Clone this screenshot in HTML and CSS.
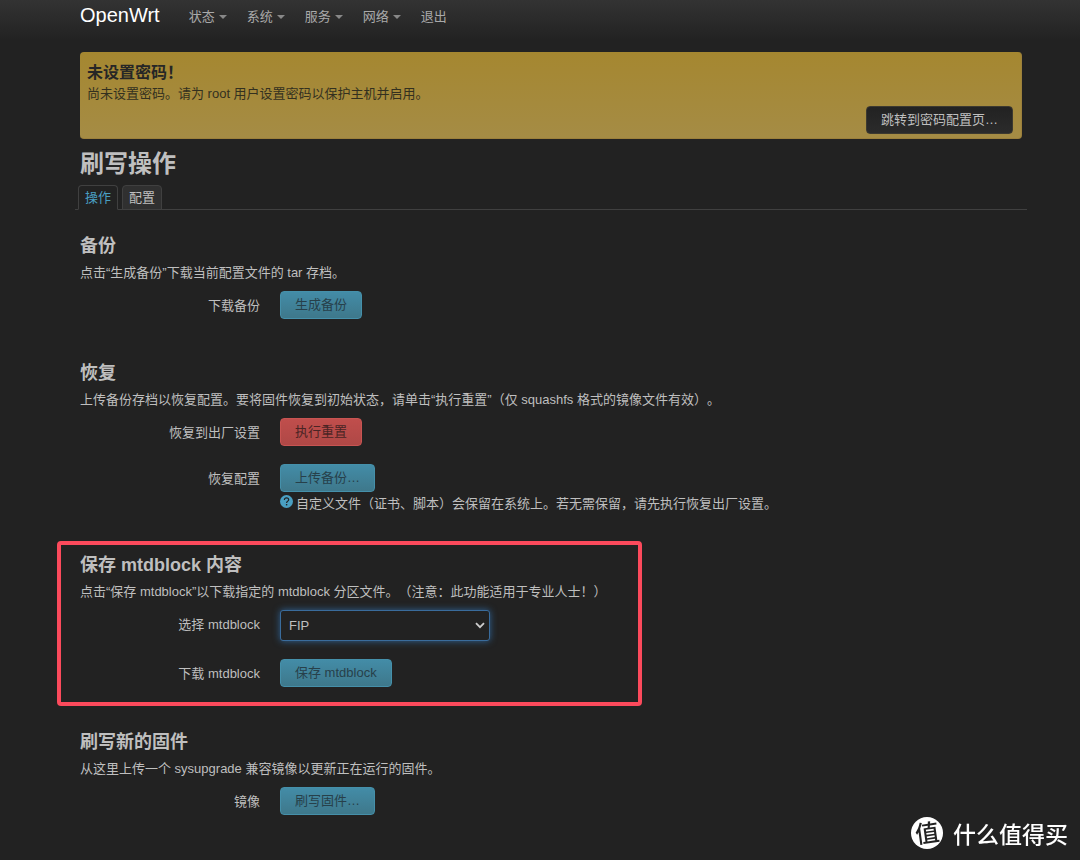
FILE: index.html
```html
<!DOCTYPE html>
<html lang="zh-CN">
<head>
<meta charset="utf-8">
<title>OpenWrt - 刷写操作</title>
<link rel="stylesheet" href="styles.css">
</head>
<body>
<header class="topbar">
  <a class="brand" href="#">OpenWrt</a>
  <nav class="nav">
    <a class="nav-link has-menu" href="#">状态</a>
    <a class="nav-link has-menu" href="#">系统</a>
    <a class="nav-link has-menu" href="#">服务</a>
    <a class="nav-link has-menu" href="#">网络</a>
    <a class="nav-link" href="#">退出</a>
  </nav>
</header>

<main class="content">
  <div class="alert">
    <h4 class="alert-title">未设置密码！</h4>
    <p class="alert-text">尚未设置密码。请为 root 用户设置密码以保护主机并启用。</p>
    <button class="btn btn-dark" type="button">跳转到密码配置页…</button>
  </div>

  <h2 class="page-title">刷写操作</h2>
  <nav class="tabs">
    <a class="tab active" href="#">操作</a>
    <a class="tab" href="#">配置</a>
  </nav>

  <section class="section">
    <h3 class="section-title">备份</h3>
    <p class="desc">点击“生成备份”下载当前配置文件的 tar 存档。</p>
    <div class="row">
      <label class="label" for="backup">下载备份</label>
      <div class="field"><button class="btn btn-blue" id="backup" type="button">生成备份</button></div>
    </div>
  </section>

  <section class="section">
    <h3 class="section-title">恢复</h3>
    <p class="desc">上传备份存档以恢复配置。要将固件恢复到初始状态，请单击“执行重置”（仅 squashfs 格式的镜像文件有效）。</p>
    <div class="row">
      <label class="label" for="reset">恢复到出厂设置</label>
      <div class="field"><button class="btn btn-red" id="reset" type="button">执行重置</button></div>
    </div>
    <div class="row">
      <label class="label" for="restore">恢复配置</label>
      <div class="field">
        <button class="btn btn-blue" id="restore" type="button">上传备份…</button>
        <p class="hint">
          <svg class="help" viewBox="0 0 13 13" aria-hidden="true">
            <circle cx="6.5" cy="6.5" r="6.5" fill="#4a9fc2"/>
            <path d="M4.4 4.9C4.4 3.5 5.3 2.8 6.5 2.8S8.7 3.5 8.7 4.7C8.7 6.1 6.6 6.2 6.6 7.9" fill="none" stroke="#222" stroke-width="1.2"/>
            <rect x="5.9" y="9" width="1.4" height="1.4" fill="#222"/>
          </svg>
          <span>自定义文件（证书、脚本）会保留在系统上。若无需保留，请先执行恢复出厂设置。</span>
        </p>
      </div>
    </div>
  </section>

  <section class="section highlighted">
    <h3 class="section-title">保存 mtdblock 内容</h3>
    <p class="desc">点击“保存 mtdblock”以下载指定的 mtdblock 分区文件。（注意：此功能适用于专业人士！）</p>
    <div class="row">
      <label class="label" for="mtd">选择 mtdblock</label>
      <div class="field select-wrap">
        <select class="select" id="mtd"><option>FIP</option></select>
        <svg class="chevron" viewBox="0 0 10 7" aria-hidden="true"><path d="M1 1.2L5 5.2L9 1.2" fill="none" stroke="#ccc" stroke-width="1.8"/></svg>
      </div>
    </div>
    <div class="row">
      <label class="label" for="savemtd">下载 mtdblock</label>
      <div class="field"><button class="btn btn-blue" id="savemtd" type="button">保存 mtdblock</button></div>
    </div>
  </section>

  <section class="section">
    <h3 class="section-title">刷写新的固件</h3>
    <p class="desc">从这里上传一个 sysupgrade 兼容镜像以更新正在运行的固件。</p>
    <div class="row">
      <label class="label" for="flash">镜像</label>
      <div class="field"><button class="btn btn-blue" id="flash" type="button">刷写固件…</button></div>
    </div>
  </section>
</main>

<div class="watermark">
  <span class="watermark-logo"><span class="watermark-glyph">值</span></span>
  <span>什么值得买</span>
</div>
</body>
</html>
```
FILE: styles.css
```css
* {
  box-sizing: border-box;
}

body {
  margin: 0;
  min-height: 100vh;
  background: #222;
  color: #bfbfbf;
  font: 13px/18px "Liberation Sans", Arial, "Noto Sans CJK SC", sans-serif;
  text-spacing-trim: space-all;
}

h2, h3, h4, p {
  margin: 0;
}

a {
  text-decoration: none;
}

.topbar {
  display: flex;
  align-items: flex-start;
  gap: 29px;
  height: 40px;
  padding: 0 58px 0 80px;
  background: linear-gradient(#333, #222);
}

.brand {
  color: #fff;
  font-size: 20px;
  line-height: 30px;
}

.nav {
  display: flex;
  gap: 20px;
}

.nav-link {
  display: flex;
  align-items: center;
  gap: 4px;
  color: #a9a9a9;
  line-height: 34px;
}

.has-menu::after {
  content: "";
  border: 4px solid transparent;
  border-top-color: #888;
  border-bottom: 0;
}

.content {
  padding: 12px 58px 46px 80px;
}

.alert {
  display: flex;
  flex-direction: column;
  padding: 10px 8px 4px 7px;
  border: 1px solid #9c803c;
  border-width: 0 1px 1px 0;
  border-radius: 4px;
  background: linear-gradient(#a58730, #a58c45);
  color: #33301f;
}

.alert-title {
  color: #262626;
  font-size: 16px;
  line-height: 22px;
}

.alert-text {
  line-height: 20px;
}

.btn {
  height: 28px;
  padding: 0 14px;
  border: 1px solid;
  border-radius: 4px;
  font: inherit;
  line-height: 18px;
  color: #27404a;
}

.btn-blue {
  border-color: #4590aa;
  background: linear-gradient(#438ca7, #3e788b);
}

.btn-red {
  border-color: #c85452;
  background: linear-gradient(#c04e4c, #af4846);
  color: #4a2424;
}

.btn-dark {
  align-self: flex-end;
  margin-top: 2px;
  border-color: #3c3930;
  background: linear-gradient(#222, #2b2b2b);
  color: #bfbfbf;
}

.page-title {
  margin-top: 7px;
  font-size: 24px;
  line-height: 36px;
}

.tabs {
  display: flex;
  gap: 4px;
  margin: 3px -5px 0;
  padding-left: 3px;
  border-bottom: 1px solid #404040;
}

.tab {
  height: 25px;
  margin-bottom: -1px;
  padding: 0 6px;
  border: 1px solid #404040;
  border-radius: 4px 4px 0 0;
  background: #303030;
  color: #bfbfbf;
  line-height: 24px;
}

.tab.active {
  border-bottom-color: #222;
  background: #222;
  color: #4a9fc2;
}

.section {
  margin-bottom: 36px;
}

.tabs + .section {
  margin-top: 18px;
}

.section:last-child {
  margin-bottom: 0;
}

.section-title {
  font-size: 18px;
  line-height: 36px;
}

.row {
  display: flex;
  gap: 20px;
  margin-top: 18px;
}

.desc + .row {
  margin-top: 9px;
}

.label {
  flex: 0 0 180px;
  padding-top: 6px;
  text-align: right;
}

.hint {
  display: flex;
  gap: 3px;
  margin-top: 3px;
}

.help {
  flex: none;
  width: 13px;
  height: 13px;
}

.highlighted {
  width: fit-content;
  margin: -8px 0 18px -23px;
  padding: 2px 31px 15px 19px;
  border: 4px solid #fc4a5c;
  border-radius: 4px;
}

.select-wrap {
  display: grid;
  grid-template-columns: 210px;
  align-items: center;
}

.select {
  grid-area: 1 / 1;
  width: 100%;
  height: 31px;
  padding: 0 8px;
  border: 1px solid #3a6c9c;
  border-radius: 3px;
  outline: 0;
  appearance: none;
  background: #222;
  box-shadow: 0 0 7px #2f6396;
  color: #bfbfbf;
  font: inherit;
}

.chevron {
  grid-area: 1 / 1;
  justify-self: end;
  width: 10px;
  height: 7px;
  margin-right: 5px;
  pointer-events: none;
}

.watermark {
  position: fixed;
  right: 12px;
  bottom: 11px;
  display: flex;
  align-items: center;
  gap: 10px;
  color: #fff;
  font: 500 23px/30px "Noto Sans CJK SC", sans-serif;
}

.watermark-logo {
  width: 32px;
  height: 32px;
  border-radius: 50%;
  background: #fff;
  color: #222;
  font-size: 24px;
  text-align: center;
}

.watermark-glyph {
  display: block;
  transform: rotate(-8deg);
}
```
